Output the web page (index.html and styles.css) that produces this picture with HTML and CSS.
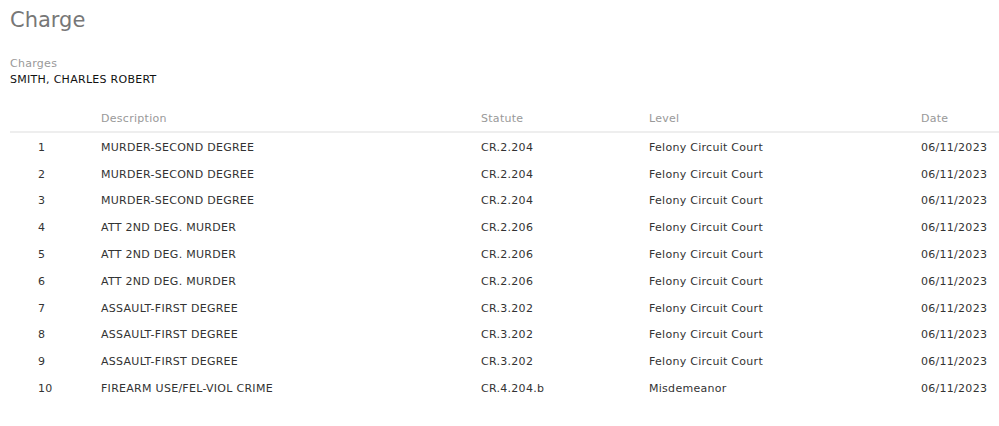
FILE: index.html
```html
<!DOCTYPE html>
<html>
<head>
<meta charset="utf-8">
<link rel="stylesheet" href="styles.css">
</head>
<body>
<div class="page">
  <h1 class="title">Charge</h1>
  <div class="subject">
    <div class="label">Charges</div>
    <div class="name">SMITH, CHARLES ROBERT</div>
  </div>
  <table class="charges">
    <thead>
      <tr><th class="num"></th><th class="desc">Description</th><th class="stat">Statute</th><th class="lvl">Level</th><th class="date">Date</th></tr>
    </thead>
    <tbody>
      <tr><td class="num">1</td><td>MURDER-SECOND DEGREE</td><td>CR.2.204</td><td>Felony Circuit Court</td><td>06/11/2023</td></tr>
      <tr><td class="num">2</td><td>MURDER-SECOND DEGREE</td><td>CR.2.204</td><td>Felony Circuit Court</td><td>06/11/2023</td></tr>
      <tr><td class="num">3</td><td>MURDER-SECOND DEGREE</td><td>CR.2.204</td><td>Felony Circuit Court</td><td>06/11/2023</td></tr>
      <tr><td class="num">4</td><td>ATT 2ND DEG. MURDER</td><td>CR.2.206</td><td>Felony Circuit Court</td><td>06/11/2023</td></tr>
      <tr><td class="num">5</td><td>ATT 2ND DEG. MURDER</td><td>CR.2.206</td><td>Felony Circuit Court</td><td>06/11/2023</td></tr>
      <tr><td class="num">6</td><td>ATT 2ND DEG. MURDER</td><td>CR.2.206</td><td>Felony Circuit Court</td><td>06/11/2023</td></tr>
      <tr><td class="num">7</td><td>ASSAULT-FIRST DEGREE</td><td>CR.3.202</td><td>Felony Circuit Court</td><td>06/11/2023</td></tr>
      <tr><td class="num">8</td><td>ASSAULT-FIRST DEGREE</td><td>CR.3.202</td><td>Felony Circuit Court</td><td>06/11/2023</td></tr>
      <tr><td class="num">9</td><td>ASSAULT-FIRST DEGREE</td><td>CR.3.202</td><td>Felony Circuit Court</td><td>06/11/2023</td></tr>
      <tr><td class="num">10</td><td>FIREARM USE/FEL-VIOL CRIME</td><td>CR.4.204.b</td><td>Misdemeanor</td><td>06/11/2023</td></tr>
    </tbody>
  </table>
</div>
</body>
</html>
```
FILE: styles.css
```css
html, body {
  margin: 0;
  padding: 0;
  background: #fff;
}
body {
  font-family: "DejaVu Sans", Verdana, sans-serif;
  font-size: 11px;
  letter-spacing: 0.28px;
  color: #333;
}
.page {
  padding: 6px 0 0 10px;
}
.title {
  margin: 0;
  font-family: "DejaVu Sans", sans-serif;
  font-weight: normal;
  font-size: 21px;
  letter-spacing: 0;
  line-height: 28px;
  color: #777;
}
.subject {
  margin-top: 22px;
}
.label {
  color: #999;
  line-height: 16px;
}
.name {
  color: #111;
  line-height: 16px;
}
.charges {
  margin-top: 18px;
  width: 989px;
  border-collapse: collapse;
}
.charges th {
  font-weight: normal;
  color: #999;
  text-align: left;
  padding: 0 0 6px 0;
  height: 19px;
  vertical-align: bottom;
  border-bottom: 2px solid #eee;
}
.charges td {
  padding: 2px 0 0 0;
  height: 24.8px;
  vertical-align: middle;
  color: #333;
}
.charges .num {
  width: 91px;
  padding-left: 28px;
  box-sizing: border-box;
}
.charges th.desc { width: 380px; }
.charges th.stat { width: 168px; }
.charges th.lvl { width: 272px; }
```
